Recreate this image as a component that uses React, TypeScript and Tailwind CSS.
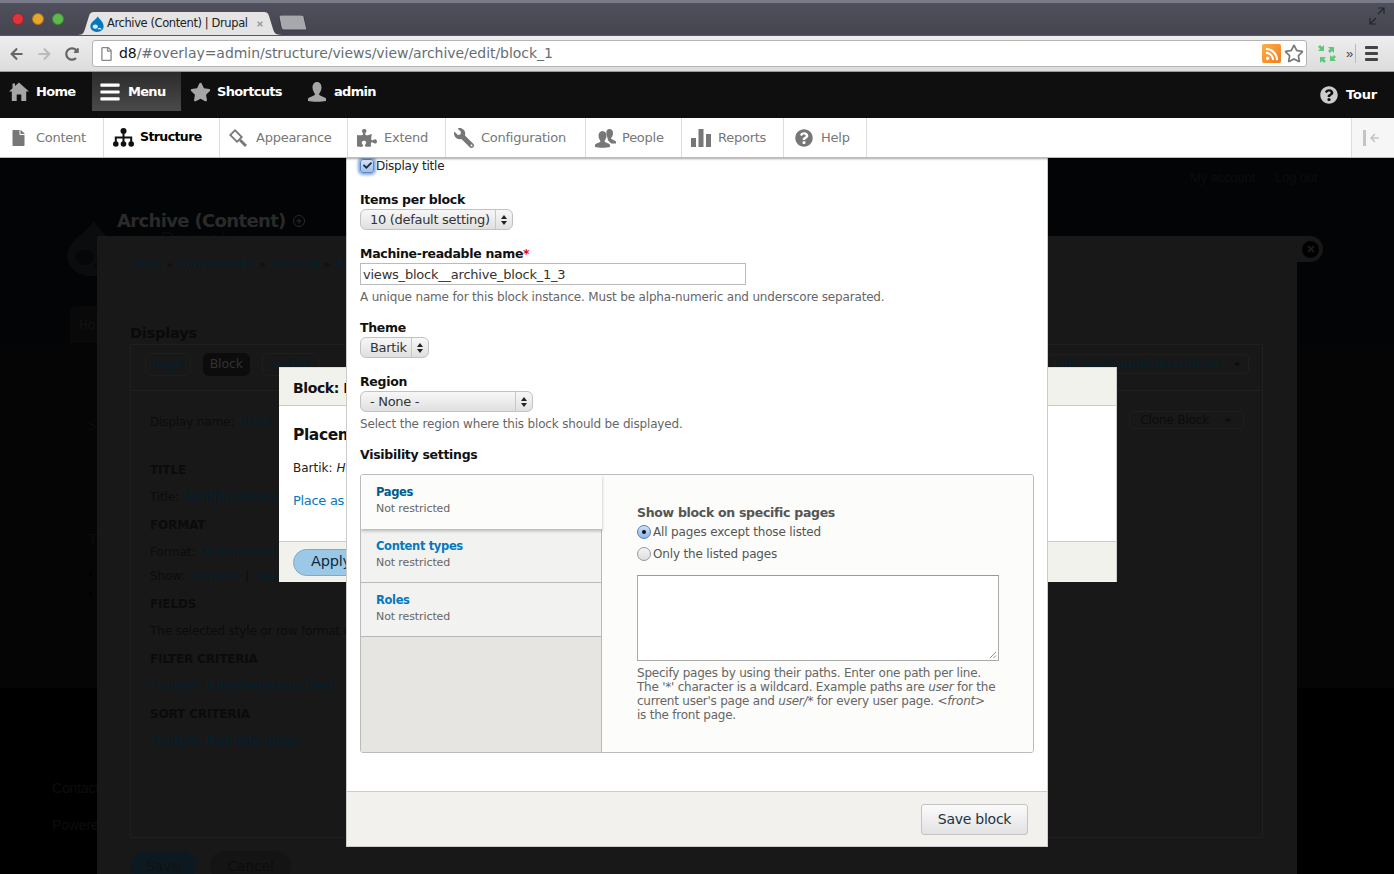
import { FaBars, FaStar, FaFile, FaPuzzlePiece, FaWrench, FaQuestionCircle, FaArrowLeft, FaArrowRight, FaRedoAlt, FaRegStar, FaRegFile, FaTimes, FaRss, FaCheck, FaPlus, FaCaretDown, FaCaretRight } from "react-icons/fa";

const font = "font-['DejaVu_Sans',sans-serif]";

const trayItems = [
  { label: "Content", icon: <FaFile className="w-[13px] h-[16px] text-[#777]" />, width: "w-[104px]", pad: "pl-[12px]", gap: "gap-[11px]" },
  { label: "Structure", icon: <StructureIcon />, width: "w-[116px]", pad: "pl-[9px]", gap: "gap-[6px]", active: true },
  { label: "Appearance", icon: <AppearanceIcon />, width: "w-[128px]", pad: "pl-[8px]", gap: "gap-[8px]" },
  { label: "Extend", icon: <FaPuzzlePiece className="w-[20px] h-[18px] text-[#777]" />, width: "w-[98px]", pad: "pl-[9px]", gap: "gap-[7px]" },
  { label: "Configuration", icon: <FaWrench className="w-[20px] h-[20px] text-[#777] -scale-x-100" />, width: "w-[140px]", pad: "pl-[8px]", gap: "gap-[7px]" },
  { label: "People", icon: <PeopleIcon />, width: "w-[96px]", pad: "pl-[9px]", gap: "gap-[6px]" },
  { label: "Reports", icon: <ReportsIcon />, width: "w-[102px]", pad: "pl-[9px]", gap: "gap-[7px]" },
  { label: "Help", icon: <FaQuestionCircle className="w-[18px] h-[18px] text-[#777]" />, width: "w-[83px]", pad: "pl-[11px]", gap: "gap-[8px]" },
];

function HomeIcon() {
  return (
    <svg width="20" height="19" viewBox="0 0 20 19" className="text-[#a6a6a6]">
      <path d="M10 0.5 L20 9.5 L17.2 9.5 L17.2 19 L12.3 19 L12.3 12.5 L7.7 12.5 L7.7 19 L2.8 19 L2.8 9.5 L0 9.5 L3.5 6.3 L3.5 1.5 L6 1.5 L6 4 Z" fill="currentColor" />
    </svg>
  );
}

function UserIcon() {
  return (
    <svg width="20" height="20" viewBox="0 0 20 20" className="text-[#a6a6a6]">
      <path d="M10 0 C13 0 14.5 2.5 14.5 5.5 C14.5 8.5 13 10.5 12 12 C12 14 17 14.5 19 16.5 L19 19 C15 20 5 20 1 19 L1 16.5 C3 14.5 8 14 8 12 C7 10.5 5.5 8.5 5.5 5.5 C5.5 2.5 7 0 10 0 Z" fill="currentColor" />
    </svg>
  );
}

function StructureIcon() {
  return (
    <svg width="21" height="19" viewBox="0 0 21 19" className="text-[#111]">
      <circle cx="10.5" cy="3" r="3" fill="currentColor" />
      <circle cx="2.8" cy="16" r="2.8" fill="currentColor" />
      <circle cx="10.5" cy="16" r="2.8" fill="currentColor" />
      <circle cx="18.2" cy="16" r="2.8" fill="currentColor" />
      <path d="M10.5 4 L10.5 15 M2.8 15 L2.8 9.5 L18.2 9.5 L18.2 15" stroke="currentColor" strokeWidth="2" fill="none" />
    </svg>
  );
}

function PeopleIcon() {
  return (
    <svg width="21" height="20" viewBox="0 0 21 20" className="text-[#777]">
      <path d="M14.5 1 C17 1 18 3 18 5.2 C18 7.5 17 9 16 10 C16 11.5 19.5 12 21 13.5 L21 15.5 L16 15.5 C15 13.5 12.5 12.8 12.7 11 C12.9 10.5 11.5 8 11.3 5.2 C11.3 3 12 1 14.5 1 Z" fill="currentColor" />
      <path d="M7.5 3 C10.3 3 11.5 5.2 11.5 7.8 C11.5 10.2 10.3 11.8 9.5 13 C9.5 14.5 13.5 15 15 16.7 L15 19 C11 20 4 20 0 19 L0 16.7 C1.5 15 5.5 14.5 5.5 13 C4.7 11.8 3.5 10.2 3.5 7.8 C3.5 5.2 4.7 3 7.5 3 Z" fill="currentColor" />
    </svg>
  );
}

function AppearanceIcon() {
  return (
    <svg width="20" height="20" viewBox="0 0 20 20" className="text-[#777]">
      <path d="M1 7 L7 1 L15 9 L9 15 Z M3.5 7 L9 12.5 L12.5 9 L7 3.5 Z" fill="currentColor" fillRule="evenodd" />
      <path d="M11 13 L13 11 L19 17 L17 19 Z" fill="currentColor" />
    </svg>
  );
}

function ReportsIcon() {
  return (
    <svg width="20" height="18" viewBox="0 0 20 18" className="text-[#777]">
      <rect x="0" y="9" width="5" height="9" fill="currentColor" />
      <rect x="7.5" y="0" width="5" height="18" fill="currentColor" />
      <rect x="15" y="5" width="5" height="13" fill="currentColor" />
    </svg>
  );
}

function DrupalDrop({ className, inner = "#fff" }: { className?: string; inner?: string }) {
  return (
    <svg viewBox="0 0 16 18" className={className}>
      <path d="M9 0 C9.5 3 15 5 15.5 11 C16 15 12.5 18 8 18 C3.5 18 0 15 0.5 11 C1 6 7 4 9 0 Z" fill="currentColor" />
      <ellipse cx="6" cy="12" rx="3" ry="2.4" fill={inner} opacity="0.85" />
      <path d="M9 15 C10 14 12 14 13 15" stroke={inner} strokeWidth="1.2" fill="none" />
    </svg>
  );
}

function ExtensionIcon() {
  const arrow = "M2 2 L8 2 L6 4 L8 6 L6 8 L4 6 L2 8 Z";
  return (
    <svg width="20" height="20" viewBox="0 0 20 20" className="text-[#5fc77a]">
      <path d={arrow} fill="currentColor" transform="translate(11 1)  rotate(90 4 4)" />
      <path d={arrow} fill="currentColor" transform="translate(1 1) rotate(180 4 4)" />
      <path d={arrow} fill="currentColor" transform="translate(1 11)" />
      <path d={arrow} fill="currentColor" transform="translate(11 11) rotate(-90 4 4)" />
    </svg>
  );
}

function BrowserChrome() {
  return (
    <div className="font-['Liberation_Sans',sans-serif]">
      {/* tab strip */}
      <div className="h-[36px] flex items-end bg-gradient-to-b from-[#4f505c] to-[#44454f] border-t-[3px] border-t-[#7a7b88] border-b border-b-[#55565f]">
        <div className="flex items-center gap-[8px] pl-[12px] pb-[10px] w-[78px]">
          <span className="w-[12px] h-[12px] rounded-full bg-[#e0333a] border border-[#a02226]" />
          <span className="w-[12px] h-[12px] rounded-full bg-[#e9a52c] border border-[#a8761a]" />
          <span className="w-[12px] h-[12px] rounded-full bg-[#5dbb4e] border border-[#3c8a32]" />
        </div>
        <div className="relative w-[204px] h-[23px]">
          <svg width="204" height="23" viewBox="0 0 204 23" className="absolute inset-0">
            <path d="M0 23 C5 23 6 20 7 17 L11 4 C12 1 13 0 16 0 L186 0 C189 0 190 1 191 4 L195 17 C196 20 197 23 204 23 Z" fill="#e4e4e4" />
          </svg>
          <div className="relative flex items-center h-full pl-[12px]">
            <DrupalDrop className="w-[14px] h-[16px] text-[#0678be]" />
            <span className="ml-[3px] text-[11.5px] text-[#222] whitespace-nowrap font-['DejaVu_Sans',sans-serif] tracking-[-0.4px]">Archive (Content) | Drupal</span>
            <FaTimes className="absolute left-[178px] top-[8px] w-[8px] h-[8px] text-[#999]" />
          </div>
        </div>
        <svg width="32" height="16" viewBox="0 0 32 16" className="-ml-[5px] mb-[4px]">
          <path d="M2 2 C2 1 3 0 4 0 L24 0 C26 0 27 1 27 2 L30 15 L7 15 C5 15 5 14 4 12 Z" fill="#a7a8ab" stroke="#3b3c44" />
        </svg>
        <div className="flex-1" />
        <svg width="16" height="18" viewBox="0 0 16 18" className="mb-[10px] mr-[9px] text-[#23242a]">
          <path d="M9 1 L15 1 L15 7 M15 1 L9 7 M1 11 L1 17 L7 17 M1 17 L7 11" stroke="currentColor" strokeWidth="1.2" fill="none" />
        </svg>
      </div>
      {/* address row */}
      <div className="h-[36px] flex items-center bg-gradient-to-b from-[#eeeeee] to-[#dcdcdc] border-b border-[#9a9a9a]">
        <div className="w-[92px] flex items-center pl-[9px] gap-[13px]">
          <FaArrowLeft className="w-[15px] h-[14px] text-[#666]" />
          <FaArrowRight className="w-[15px] h-[14px] text-[#bbb]" />
          <FaRedoAlt className="w-[14px] h-[14px] text-[#666]" />
        </div>
        <div className="w-[1215px] h-[27px] flex items-center bg-white border border-[#b4b4b4] rounded-[3px] pl-[8px] pr-[2px]">
          <FaRegFile className="w-[11px] h-[14px] text-[#888]" />
          <span className="ml-[7px] text-[14px] font-['DejaVu_Sans',sans-serif] whitespace-nowrap tracking-[-0.05px]"><span className="text-[#111]">d8</span><span className="text-[#666e73]">/#overlay=admin/structure/views/view/archive/edit/block_1</span></span>
          <div className="flex-1" />
          <span className="w-[19px] h-[19px] rounded-[2px] flex items-center justify-center bg-gradient-to-br from-[#fbb040] to-[#f47a1f]"><FaRss className="w-[14px] h-[14px] text-white" /></span>
          <FaRegStar className="ml-[3px] w-[20px] h-[19px] text-[#777]" />
        </div>
        <div className="ml-[10px]"><ExtensionIcon /></div>
        <span className="ml-[9px] text-[13px] text-[#444] leading-none">»</span>
        <div className="ml-[2px] h-[19px] border-l border-[#bbb]" />
        <div className="ml-[9px] flex flex-col gap-[3px]">
          <span className="w-[13px] h-[3px] bg-[#444] rounded-[1px]" />
          <span className="w-[13px] h-[3px] bg-[#444] rounded-[1px]" />
          <span className="w-[13px] h-[3px] bg-[#444] rounded-[1px]" />
        </div>
      </div>
    </div>
  );
}

function Toolbar() {
  const item = "flex items-center text-white font-bold text-[13px] tracking-[-0.7px]";
  return (
    <div className={`${font} h-[46px] bg-[#0f0f0f] flex items-start`}>
      <div className={`${item} h-[39px] w-[92px] pl-[9px] gap-[7px]`}>
        <HomeIcon />
        Home
      </div>
      <div className={`${item} h-[39px] w-[89px] pl-[8px] gap-[8px] bg-gradient-to-b from-[#2c2c2c] to-[#4a4a4a]`}>
        <FaBars className="w-[20px] h-[22px] text-white" />
        Menu
      </div>
      <div className={`${item} h-[39px] pl-[9px] gap-[6px] w-[117px]`}>
        <FaStar className="w-[21px] h-[20px] text-[#a6a6a6]" />
        Shortcuts
      </div>
      <div className={`${item} h-[39px] pl-[9px] gap-[7px]`}>
        <UserIcon />
        admin
      </div>
      <div className="flex-1" />
      <div className="flex items-center text-white font-bold text-[13px] tracking-[-0.2px] h-[46px] pr-[17px] gap-[8px]">
        <FaQuestionCircle className="w-[18px] h-[18px] text-[#ccc]" />
        Tour
      </div>
    </div>
  );
}

function Tray() {
  return (
    <div className={`${font} relative z-20 h-[40px] bg-white flex border-b border-[#bbb] shadow-[0_1px_2px_rgba(0,0,0,0.35)]`}>
      {trayItems.map((t) => (
        <div key={t.label} className={`${t.width} ${t.pad} ${t.gap} flex items-center border-r border-[#ddd] ${t.active ? "text-black font-bold text-[12.5px] tracking-[-0.6px]" : "text-[#777] text-[13px] tracking-[-0.25px]"}`}>
          {t.icon}
          {t.label}
        </div>
      ))}
      <div className="flex-1" />
      <div className="w-[43px] border-l border-[#ddd] bg-[#f6f6f6] flex items-center pl-[11px] gap-[3px] text-[#c4c4c4]">
        <span className="w-[3px] h-[16px] bg-[#c4c4c4]" />
        <FaArrowLeft className="w-[11px] h-[10px]" />
      </div>
    </div>
  );
}

function DimRow({ title, children }: { title: string; children: React.ReactNode }) {
  return (
    <div className="flex flex-col">
      <div className="h-[27px] flex items-center font-bold text-[12px] text-[#0b0b0b]">{title}</div>
      <div className="h-[28px] flex items-center whitespace-nowrap">{children}</div>
    </div>
  );
}

// dimmed admin page seen behind the dialogs
function DimmedPage() {
  const link = "text-[#03202f]";
  return (
    <div className={`${font} relative h-[716px] bg-black overflow-hidden text-[12px] tracking-[-0.15px] text-[#0c0c0c]`}>
      <div className="absolute left-0 right-0 top-0 h-[185px] bg-[#020406]" />
      <div className="absolute left-0 right-0 top-[185px] h-[345px] bg-[#050505]" />
      <div className="absolute left-[1190px] top-[10px] flex gap-[20px] font-['Liberation_Sans',sans-serif] text-[13px] text-[#0d0d0d]"><span>My account</span><span>Log out</span></div>
      <div className="absolute left-[117px] top-[49px] font-bold text-[18px] text-[#2a2a2a] whitespace-nowrap tracking-[-0.65px]">Archive (Content)</div>
      <div className="absolute left-[293px] top-[57px] w-[12px] h-[12px] rounded-full border border-[#2a2a2a] flex items-center justify-center"><FaPlus className="w-[6px] h-[6px] text-[#2a2a2a]" /></div>
      <div className="absolute left-[160px] top-[66px] text-[20px] text-[#0a0a0a]">Drupal</div>
      <DrupalDrop inner="#060708" className="absolute left-[66px] top-[60px] w-[50px] h-[60px] text-[#0b0c0d]" />
      <div className="absolute left-[70px] top-[148px] w-[40px] h-[37px] rounded-t-[6px] bg-[#090909] pl-[9px] pt-[10px] text-[#111]">Ho</div>
      <div className="absolute left-[88px] top-[256px] text-[15px] font-['Liberation_Serif',serif]">S</div>
      <div className="absolute left-[88px] top-[370px] text-[15px] font-['Liberation_Serif',serif]">T</div>
      <FaCaretRight className="absolute left-[87px] top-[411px] w-[8px] h-[10px] text-[#000]" />
      <FaCaretRight className="absolute left-[87px] top-[431px] w-[8px] h-[10px] text-[#000]" />
      <div className="absolute left-[52px] top-[620px] font-['Liberation_Sans',sans-serif] text-[14px] text-[#0d0d0d]">Contact</div>
      <div className="absolute left-[52px] top-[657px] font-['Liberation_Sans',sans-serif] text-[14px] text-[#0d0d0d]">Powered</div>

      {/* overlay panel */}
      <div className="absolute left-[97px] top-[78px] w-[1200px] h-[640px] bg-[#181818] rounded-tl-[2px] px-[33px] pt-[19px]">
        <div className={`${link} h-[20px] flex items-center gap-[4px] whitespace-nowrap text-[11px]`}>
          <span>Home</span><span className="text-[#0c0c0c]">»</span><span>Administration</span><span className="text-[#0c0c0c]">»</span><span>Structure</span><span className="text-[#0c0c0c]">»</span><span>Views</span>
        </div>
        <div className="mt-[49px] h-[20px] flex items-center font-bold text-[14.5px] text-[#0a0a0a] tracking-[-0.2px]">Displays</div>
        <div className="w-[1133px] h-[494px] border border-[#1f1f1f]">
          <div className="h-[46px] border-b border-[#1f1f1f] flex items-start pt-[8px] pl-[14px] pr-[13px] gap-[12px] text-[12.5px]">
            <span className={`${link} px-[7px] h-[23px] flex items-center rounded-[6px] border border-[#1e1e1e]`}>Page</span>
            <span className="px-[7px] h-[23px] flex items-center rounded-[6px] bg-[#0c0c0c] text-[#333]">Block</span>
            <span className={`${link} px-[10px] h-[23px] flex items-center gap-[2px] rounded-[6px] border border-[#1e1e1e]`}><FaPlus className="w-[9px] h-[9px]" />Add</span>
            <div className="flex-1" />
            <span className={`${link} h-[20px] mt-[1px] flex items-center gap-[12px] px-[6px] rounded-[4px] border border-[#1e1e1e]`}>Edit view name/description<FaCaretDown className="w-[10px] h-[10px] text-[#0c0c0c]" /></span>
          </div>
          <div className="pl-[19px] pr-[18px] pt-[19px]">
            <div className="flex items-center justify-between h-[24px] text-[12px]">
              <div>Display name: <span className={`${link} ml-[2px]`}>Block</span></div>
              <span className="h-[18px] mb-[4px] flex items-center gap-[14px] px-[10px] rounded-[4px] border border-[#1e1e1e]">Clone Block<FaCaretDown className="w-[10px] h-[10px]" /></span>
            </div>
            <div className="mt-[22px] text-[12px]">
              <DimRow title="TITLE"><span>Title: <span className={`${link} ml-[2px]`}>Monthly archive</span></span></DimRow>
              <DimRow title="FORMAT"><span>Format: <span className={`${link} ml-[2px]`}>Unformatted list</span></span></DimRow>
              <div className="-mt-[3px] mb-[1px] h-[26px] flex items-center"><span>Show: <span className={`${link} ml-[2px]`}>Content</span> <span className="mx-[4px]">|</span> <span className={link}>Teaser</span></span></div>
              <DimRow title="FIELDS"><span>The selected style or row format does not use fields.</span></DimRow>
              <DimRow title="FILTER CRITERIA"><span className={`${link} ml-[2px]`}>Content: Published status (Yes)</span></DimRow>
              <DimRow title="SORT CRITERIA"><span className={`${link} ml-[2px]`}>Content: Post date (desc)</span></DimRow>
            </div>
          </div>
        </div>
        <div className="mt-[13px] flex gap-[14px] text-[14px]">
          <span className="w-[66px] h-[30px] rounded-full bg-[#0c1920] flex items-center justify-center text-[#111]">Save</span>
          <span className="w-[81px] h-[30px] rounded-full bg-[#141414] flex items-center justify-center">Cancel</span>
        </div>
      </div>
      {/* close tab of the overlay */}
      <div className="absolute left-[1297px] top-[78px] w-[26px] h-[26px] rounded-r-full bg-[#181818] flex items-center">
        <span className="w-[17px] h-[17px] ml-[5px] rounded-full bg-[#000] flex items-center justify-center"><FaTimes className="w-[10px] h-[10px] text-[#1c1c1c]" /></span>
      </div>
    </div>
  );
}

function PlacementDialog() {
  return (
    <div className={`${font} absolute left-[279px] top-[209px] w-[838px] h-[215px] bg-white flex flex-col border-r border-[#ccc] overflow-hidden`}>
      <div className="h-[39px] bg-[#f2f2ed] border-t border-[#ddd] border-b border-b-[#ccc] pl-[14px] pt-[3px] flex items-center font-bold text-[14px] text-[#111] tracking-[-0.4px]">Block: Monthly archive</div>
      <div className="flex-1 pl-[14px] pt-[19px]">
        <div className="font-bold text-[15.5px] leading-[20px] tracking-[-0.4px] text-[#111]">Placement</div>
        <div className="mt-[15px] text-[12px] leading-[16px] text-[#222]">Bartik: <em>Header</em></div>
        <div className="mt-[16px] text-[13px] leading-[18px] text-[#0678be] tracking-[-0.3px]">Place as block</div>
      </div>
      <div className="h-[41px] bg-[#f2f2ed] border-t border-[#ccc] pl-[14px] flex items-center">
        <span className="w-[80px] h-[27px] rounded-full bg-[#9cc8e8] border border-[#7fa9c8] pl-[17px] flex items-center text-[14.5px] tracking-[-0.2px] text-[#0e2a3c]">Apply</span>
      </div>
    </div>
  );
}

function SelectBox({ label, width }: { label: string; width: string }) {
  return (
    <div className={`${width} h-[21px] flex items-stretch rounded-[6px] border border-[#c2c2c2] bg-gradient-to-b from-[#f7f7f7] via-[#ececec] to-[#dfdfdf] text-[13px] text-[#333]`}>
      <span className="flex-1 pl-[9px] flex items-center whitespace-nowrap tracking-[-0.3px]">{label}</span>
      <span className="w-[17px] border-l border-[#c8c8c8] flex flex-col items-center justify-center gap-[2px]">
        <span className="w-0 h-0 border-x-[3px] border-x-transparent border-b-[4px] border-b-[#222]" />
        <span className="w-0 h-0 border-x-[3px] border-x-transparent border-t-[4px] border-t-[#222]" />
      </span>
    </div>
  );
}

function VerticalTab({ title, selected }: { title: string; selected?: boolean }) {
  return (
    <div className={`h-[54px] pl-[15px] pt-[9px] border-[#b8b8b8] ${selected ? "bg-[#fcfcfa] shadow-[0_2px_3px_rgba(0,0,0,0.25)] relative z-10" : "bg-[#f2f2f0] border-b border-r"}`}>
      <div className={`font-bold text-[11.5px] leading-[16px] tracking-[-0.35px] ${selected ? "text-[#005a8a]" : "text-[#0678be]"}`}>{title}</div>
      <div className="text-[11px] leading-[17px] text-[#666] tracking-[-0.1px]">Not restricted</div>
    </div>
  );
}

function BlockDialog() {
  const label = "font-bold text-[12.5px] leading-[16px] text-[#111] tracking-[-0.3px]";
  const help = "text-[12px] leading-[14px] text-[#666] whitespace-nowrap";
  return (
    <div className={`${font} absolute left-[346px] top-0 w-[702px] h-[689px] bg-white border-x border-b border-[#ccc] flex flex-col`}>
      <div className="flex-1 pl-[13px] pr-[13px]">
        <div className="h-[15px] flex items-center gap-[2px] text-[12px] text-[#222] tracking-[-0.25px]">
          <span className="w-[14px] h-[14px] rounded-[3px] bg-gradient-to-b from-[#d5e3f7] to-[#9dbfe9] border border-[#5b86c2] shadow-[0_0_3px_2px_rgba(70,130,210,0.7)] flex items-center justify-center">
            <FaCheck className="w-[9px] h-[9px] text-[#1b2a44]" />
          </span>
          Display title
        </div>
        <div className={`${label} mt-[19px]`}>Items per block</div>
        <div className="mt-[1px]"><SelectBox label="10 (default setting)" width="w-[153px]" /></div>
        <div className={`${label} mt-[16px]`}>Machine-readable name<span className="text-[#e00]">*</span></div>
        <div className="mt-[1px] w-[386px] h-[22px] border border-[#bbb] pl-[2px] pt-[1px] flex items-center text-[13px] text-[#333] tracking-[-0.22px]">views_block__archive_block_1_3</div>
        <div className={`${help} tracking-[-0.17px] mt-[5px]`}>A unique name for this block instance. Must be alpha-numeric and underscore separated.</div>
        <div className={`${label} mt-[16px]`}>Theme</div>
        <div className="mt-[1px]"><SelectBox label="Bartik" width="w-[69px]" /></div>
        <div className={`${label} mt-[16px]`}>Region</div>
        <div className="mt-[1px]"><SelectBox label="- None -" width="w-[173px]" /></div>
        <div className={`${help} tracking-[-0.17px] mt-[5px]`}>Select the region where this block should be displayed.</div>
        <div className={`${label} mt-[16px]`}>Visibility settings</div>
        <div className="mt-[11px] w-[674px] h-[279px] rounded-[3px] border border-[#bbb] bg-[#fcfcfa] flex overflow-hidden">
          <div className="w-[241px] flex flex-col bg-[#e6e5e1]">
            <VerticalTab title="Pages" selected />
            <VerticalTab title="Content types" />
            <VerticalTab title="Roles" />
            <div className="flex-1 border-r border-[#b8b8b8]" />
          </div>
          <div className="flex-1 pl-[35px] pt-[30px] bg-[#fcfcfa]">
            <div className="font-bold text-[12.5px] leading-[16px] text-[#555] tracking-[-0.3px]">Show block on specific pages</div>
            <div className="h-[22px] flex items-center gap-[2px] text-[12px] text-[#555] tracking-[-0.16px]">
              <span className="w-[14px] h-[14px] rounded-full bg-gradient-to-b from-[#cfe0f7] to-[#8fb6ea] border border-[#5a7fb5] flex items-center justify-center"><span className="w-[4px] h-[4px] rounded-full bg-[#111]" /></span>
              All pages except those listed
            </div>
            <div className="h-[22px] flex items-center gap-[2px] text-[12px] text-[#555] tracking-[-0.16px]">
              <span className="w-[14px] h-[14px] rounded-full bg-gradient-to-b from-[#f4f4f4] to-[#ddd] border border-[#999]" />
              Only the listed pages
            </div>
            <div className="mt-[10px] relative w-[362px] h-[86px] bg-white border border-[#aaa] border-t-[#999]">
              <svg width="8" height="8" viewBox="0 0 8 8" className="absolute right-[1px] bottom-[1px] text-[#777]">
                <path d="M1 7 L7 1 M4.5 7 L7 4.5" stroke="currentColor" strokeWidth="0.8" />
              </svg>
            </div>
            <div className={`${help} tracking-[-0.23px] mt-[5px]`}>
              Specify pages by using their paths. Enter one path per line.<br />
              The '*' character is a wildcard. Example paths are <em>user</em> for the<br />
              current user's page and <em>user/*</em> for every user page. <em>&lt;front&gt;</em><br />
              is the front page.
            </div>
          </div>
        </div>
      </div>
      <div className="h-[55px] bg-[#f2f1ed] border-t border-[#ccc] flex items-center justify-end pr-[19px]">
        <span className="w-[107px] h-[31px] rounded-[3px] border border-[#c4c4c4] bg-gradient-to-b from-[#fbfbfb] to-[#e2e2e2] flex items-center justify-center text-[14px] text-[#1c3344] tracking-[-0.25px]">Save block</span>
      </div>
    </div>
  );
}

export default function App() {
  return (
    <div className="w-[1394px] h-[874px] overflow-hidden bg-black">
      <BrowserChrome />
      <Toolbar />
      <Tray />
      <div className="relative h-[716px]">
        <DimmedPage />
        <PlacementDialog />
        <BlockDialog />
      </div>
    </div>
  );
}
